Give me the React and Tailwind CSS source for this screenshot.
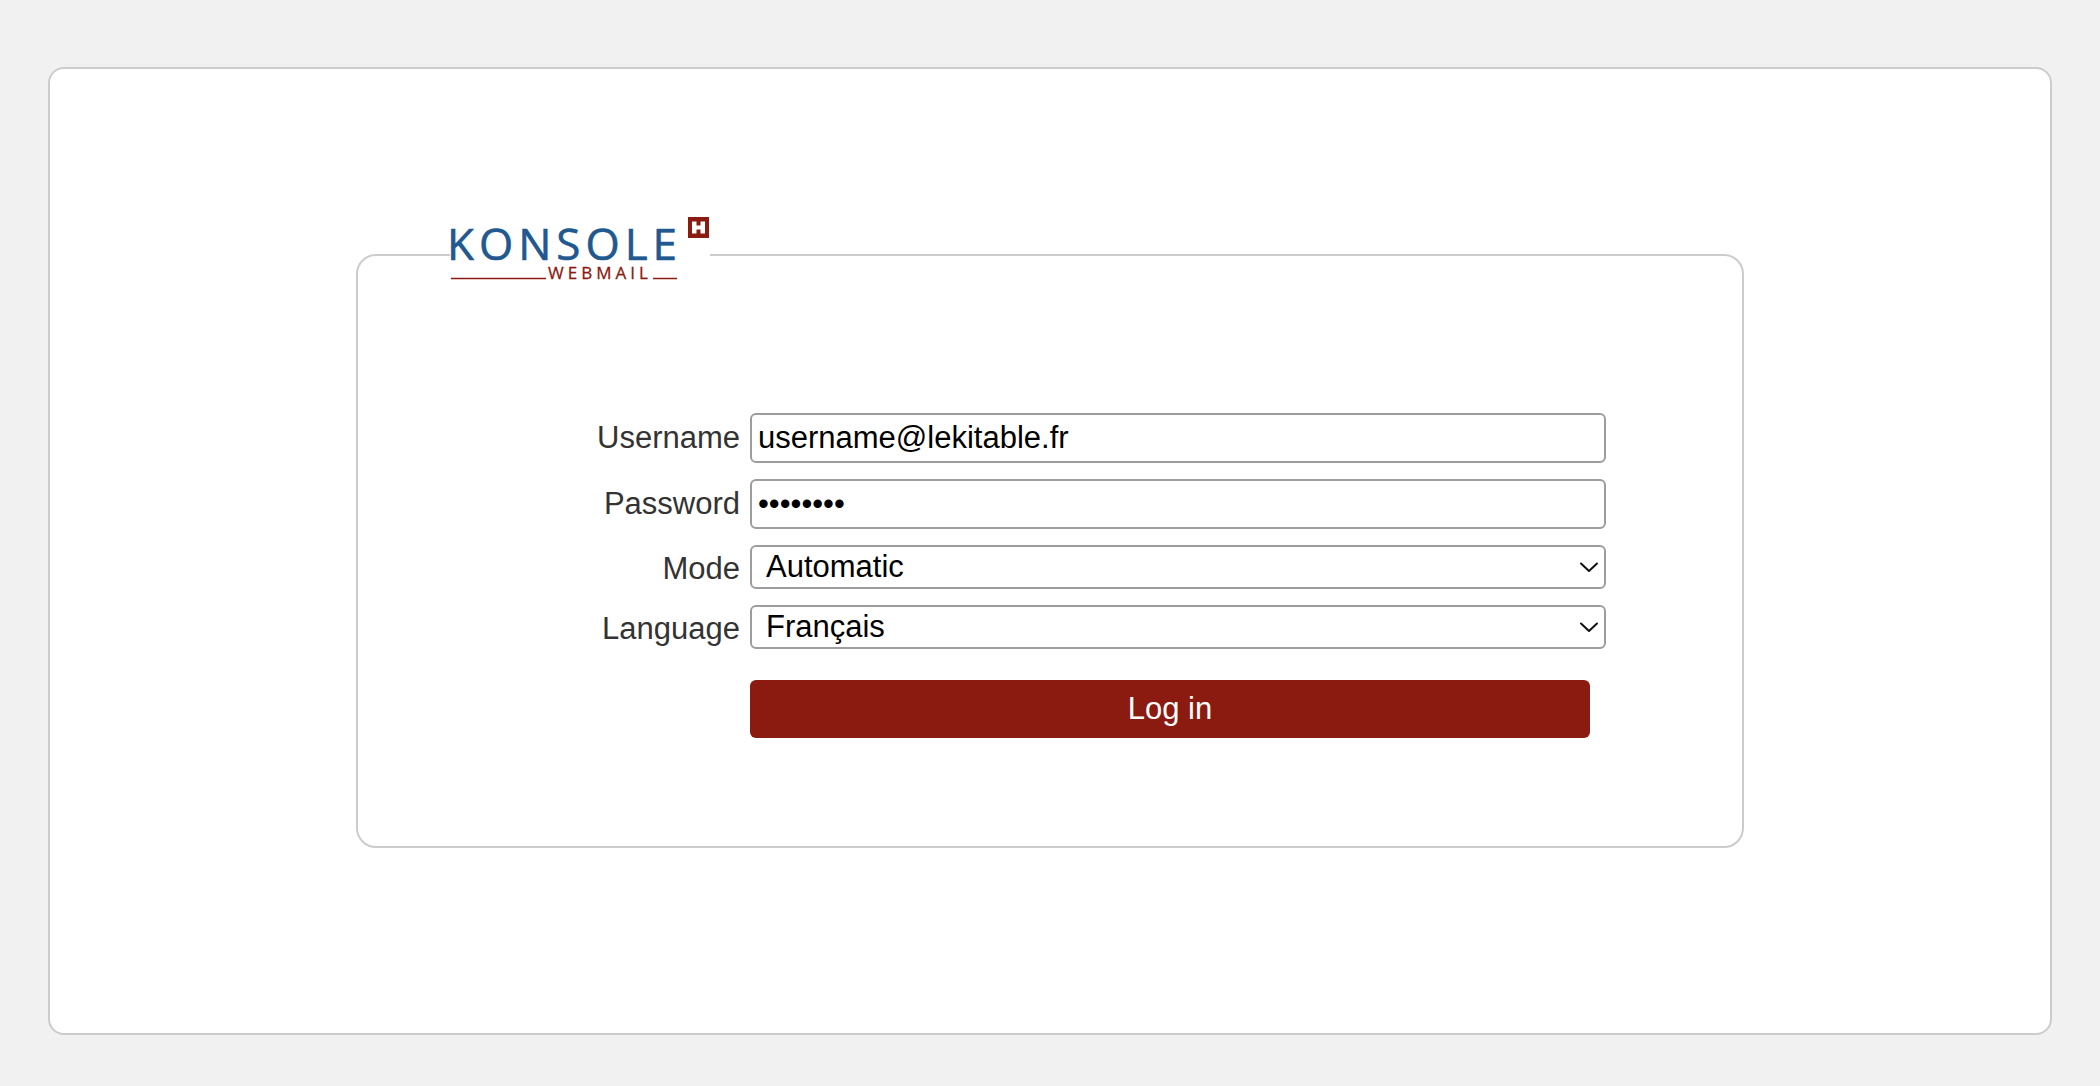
import React from 'react';

const fieldClass =
  'w-full rounded-md border-2 border-[#9d9d9d] bg-white text-black outline-none';
const labelClass = 'text-right text-[#333333]';

function Logo() {
  return (
    <svg width="260" height="76" viewBox="0 0 260 76" role="img" aria-label="Konsole H Webmail" className="block overflow-visible">
      <text x="-3" y="43" fontFamily="'Open Sans', 'Noto Sans', sans-serif" fontSize="44" letterSpacing="5" fill="#20588f" stroke="#20588f" strokeWidth="0.6">
        KONSOLE
      </text>
      <path d="M1 61.5H96M203 61.5H227" stroke="#8b1a10" strokeWidth="1.4" />
      <text x="98" y="62" fontFamily="'Open Sans', 'Noto Sans', sans-serif" fontSize="17" letterSpacing="4" fill="#8b1a10" stroke="#8b1a10" strokeWidth="0.3">
        WEBMAIL
      </text>
      <rect x="238" y="0" width="21" height="21" fill="#8b1a10" />
      <path d="M242 4.5h4.5v4h4v-4h4.5v12h-4.5v-4h-4v4h-4.5z" fill="#ffffff" />
    </svg>
  );
}

function SelectField({ id, label, options }) {
  return (
    <>
      <label htmlFor={id} className={`${labelClass} pt-1`}>
        {label}
      </label>
      <div className="relative">
        <select id={id} className={`${fieldClass} block h-11 appearance-none pl-3.5 pr-12 leading-9`}>
          {options.map((option) => (
            <option key={option}>{option}</option>
          ))}
        </select>
        <svg
          width="20"
          height="12"
          viewBox="0 0 20 12"
          fill="none"
          stroke="#111111"
          strokeWidth="2"
          strokeLinecap="round"
          strokeLinejoin="round"
          className="pointer-events-none absolute right-[7px] top-4"
        >
          <path d="M2 2.5l8 7.5 8-7.5" />
        </svg>
      </div>
    </>
  );
}

export default function App() {
  return (
    <div className="min-h-screen bg-[#f1f1f1] px-12 pb-[52px] pt-[67px] font-['Liberation_Sans',Arial,sans-serif] text-[31px] leading-9">
      <main className="rounded-2xl border-2 border-[#cccccc] bg-white px-6 pb-[185px] pt-[148px]">
        <form onSubmit={(event) => event.preventDefault()}>
          <fieldset className="mx-auto w-full max-w-[1388px] rounded-[20px] border-2 border-[#cccccc] pb-[108px] pl-[92px] pr-[136px]">
            <legend>
              <Logo />
            </legend>
            <div className="grid grid-cols-[290px_1fr] items-center gap-x-2.5 gap-y-4 pt-[120px]">
              <label htmlFor="username" className={labelClass}>
                Username
              </label>
              <input id="username" type="text" defaultValue="username@lekitable.fr" className={`${fieldClass} h-[50px] px-1.5`} />
              <label htmlFor="password" className={labelClass}>
                Password
              </label>
              <input id="password" type="password" defaultValue="password" className={`${fieldClass} h-[50px] px-1.5`} />
              <SelectField id="mode" label="Mode" options={['Automatic']} />
              <SelectField id="language" label="Language" options={['Français']} />
              <button type="submit" className="col-start-2 mr-4 mt-[15px] h-[58px] rounded-md bg-[#8b1a10] text-white">
                Log in
              </button>
            </div>
          </fieldset>
        </form>
      </main>
    </div>
  );
}
